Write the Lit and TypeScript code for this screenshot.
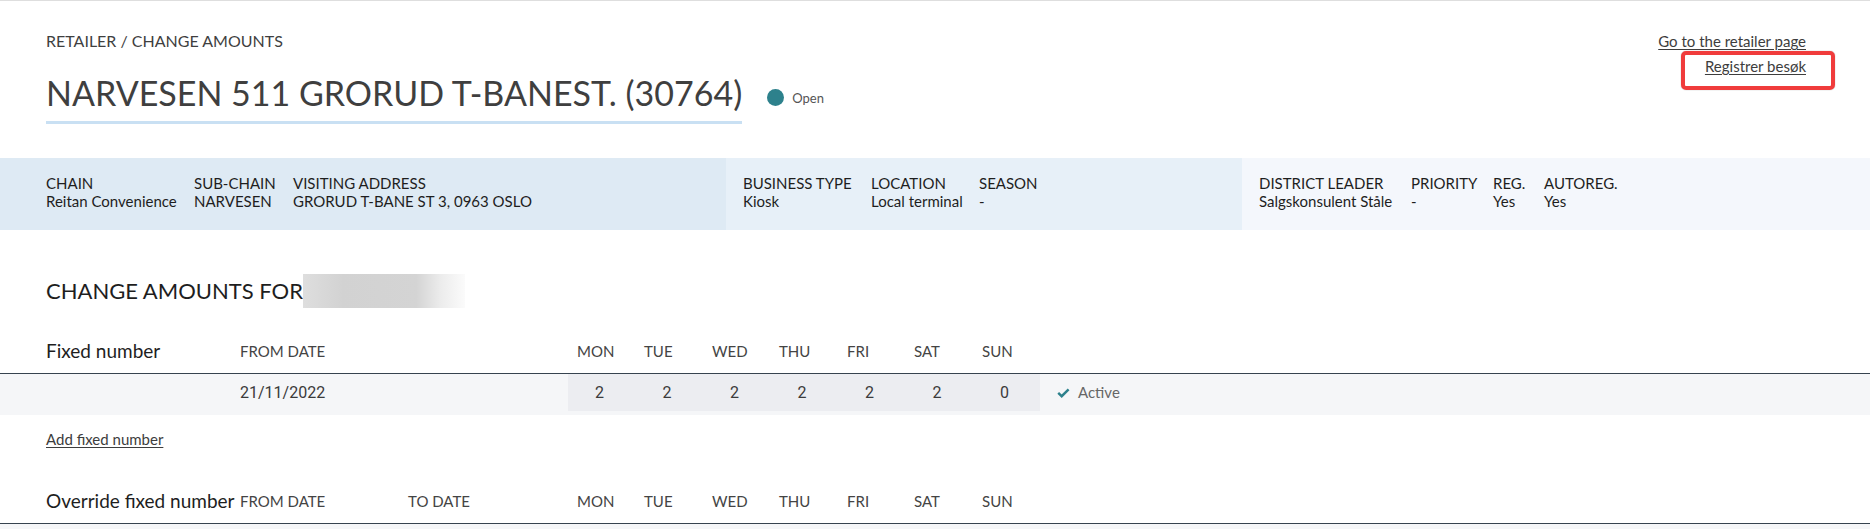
import { LitElement, html, css } from "lit";
import { customElement } from "lit/decorators.js";

const DAYS = ["MON", "TUE", "WED", "THU", "FRI", "SAT", "SUN"];

const INFO = [
  {
    name: "outlet",
    items: [
      ["CHAIN", "Reitan Convenience"],
      ["SUB-CHAIN", "NARVESEN"],
      ["VISITING ADDRESS", "GRORUD T-BANE ST 3, 0963 OSLO"],
    ],
  },
  {
    name: "business",
    items: [
      ["BUSINESS TYPE", "Kiosk"],
      ["LOCATION", "Local terminal"],
      ["SEASON", "-"],
    ],
  },
  {
    name: "district",
    items: [
      ["DISTRICT LEADER", "Salgskonsulent Ståle"],
      ["PRIORITY", "-"],
      ["REG.", "Yes"],
      ["AUTOREG.", "Yes"],
    ],
  },
];

interface AmountRow {
  from: string;
  to: string;
  amounts: number[];
  status: string;
}

@customElement("app-root")
export class AppRoot extends LitElement {
  static styles = css`
    :host {
      display: block;
      border-top: 1px solid #dedede;
      background: #fff;
      color: #1e1e1e;
      font-family: Lato, "Liberation Sans", sans-serif;
      font-size: 15px;
      line-height: 18px;
    }
    a {
      color: #3d3d3d;
      text-underline-offset: 2px;
    }
    .top {
      display: flex;
      justify-content: space-between;
      padding: 30px 64px 34px 46px;
      color: #3f3f3f;
    }
    .crumb {
      font-size: 16px;
      line-height: 20px;
    }
    .headline {
      display: flex;
      align-items: center;
      gap: 25px;
      margin-top: 20px;
    }
    h1 {
      margin: 0;
      padding-bottom: 6px;
      border-bottom: 3px solid #c9e0f3;
      font-size: 34px;
      line-height: 44px;
      font-weight: 400;
    }
    .state {
      display: flex;
      align-items: center;
      gap: 8px;
      font-size: 13px;
      color: #555;
    }
    .dot {
      width: 17px;
      height: 17px;
      border-radius: 50%;
      background: #2d818c;
    }
    .links {
      display: flex;
      flex-direction: column;
      align-items: flex-end;
      margin-top: -2px;
      line-height: 25px;
    }
    .marked {
      position: relative;
    }
    .marked::after {
      content: "";
      position: absolute;
      inset: -3px -29px -11px -24px;
      border: 4px solid #f03c3c;
      border-radius: 5px;
      box-shadow: 0 0 1px #888;
      pointer-events: none;
    }
    .info {
      display: grid;
      grid-template-columns: 726fr 516fr 628fr;
    }
    .group {
      display: grid;
      margin: 0;
      padding: 16px 16px 20px 17px;
      white-space: nowrap;
    }
    .group dd {
      margin: 0;
    }
    .outlet {
      padding-left: 46px;
      grid-template-columns: 148px 99px 1fr;
      background: #deeaf4;
    }
    .business {
      grid-template-columns: 128px 108px 1fr;
      background: #e7f0f8;
    }
    .district {
      grid-template-columns: 152px 82px 51px 1fr;
      background: #f4f7fc;
    }
    .title {
      display: flex;
      align-items: center;
      margin: 44px 46px 25px;
      font-size: 22px;
      line-height: 34px;
      font-weight: 400;
    }
    .masked {
      width: 162px;
      height: 34px;
      background: linear-gradient(90deg, #dedede, #d2d2d2 25%, #d4d4d4 70%, #ececec 85%, #fbfbfb);
    }
    table {
      width: 100%;
      table-layout: fixed;
      border-collapse: separate;
      border-spacing: 0;
      white-space: nowrap;
    }
    th,
    td {
      padding: 0;
      text-align: left;
      font-weight: 400;
      color: #444;
    }
    thead th {
      height: 40px;
      border-bottom: 1px solid #36434f;
      vertical-align: top;
      line-height: 37px;
    }
    thead .name {
      width: 194px;
      padding-left: 46px;
      font-size: 19px;
      color: #1e1e1e;
      line-height: 35px;
    }
    .from {
      width: 168px;
    }
    .to {
      width: 160px;
    }
    .day {
      width: 58px;
      padding-left: 9px;
    }
    .day:nth-child(odd) {
      width: 59px;
    }
    tbody tr {
      background: #f5f6f8;
    }
    tbody td {
      height: 41px;
      vertical-align: top;
      line-height: 37px;
    }
    .date,
    .amount {
      font-family: Roboto, "Liberation Sans", sans-serif;
      font-size: 16px;
      color: #3b3b3b;
    }
    .box {
      height: 37px;
      padding-right: 4px;
      background: #ecedf1;
      text-align: center;
    }
    .status {
      padding-left: 17px;
      color: #666;
    }
    .status svg {
      width: 13px;
      height: 10px;
      margin-right: 8px;
    }
    tbody .empty {
      height: 5px;
    }
    .add {
      display: block;
      width: fit-content;
      margin: 14px 46px 34px;
      line-height: 20px;
    }
  `;

  private amountTable(name: string, hasEnd: boolean, rows: AmountRow[]) {
    return html`
      <table>
        <thead>
          <tr>
            <th class="name" scope="col">${name}</th>
            <th class="from" scope="col">FROM DATE</th>
            <th class="to" scope="col">${hasEnd ? "TO DATE" : ""}</th>
            ${DAYS.map((d) => html`<th class="day" scope="col">${d}</th>`)}
            <th></th>
          </tr>
        </thead>
        <tbody>
          ${rows.map(
            (r) => html`<tr>
              <td></td>
              <td class="date">${r.from}</td>
              <td class="date">${r.to}</td>
              ${r.amounts.map((n) => html`<td class="amount"><div class="box">${n}</div></td>`)}
              <td class="status">
                <svg viewBox="0 0 13 10" aria-hidden="true">
                  <path d="M1.2 4.8 4.7 8.2 11.6 1.3" fill="none" stroke="#2d818c" stroke-width="2.4" /></svg
                >${r.status}
              </td>
            </tr>`
          )}
          ${rows.length === 0 ? html`<tr><td class="empty" colspan="11"></td></tr>` : ""}
        </tbody>
      </table>
    `;
  }

  render() {
    return html`
      <header class="top">
        <div>
          <div class="crumb">RETAILER / CHANGE AMOUNTS</div>
          <div class="headline">
            <h1>NARVESEN 511 GRORUD T-BANEST. (30764)</h1>
            <div class="state"><span class="dot"></span>Open</div>
          </div>
        </div>
        <nav class="links">
          <a href="#retailer">Go to the retailer page</a>
          <a class="marked" href="#visit">Registrer besøk</a>
        </nav>
      </header>
      <section class="info">
        ${INFO.map(
          (g) => html`<dl class="group ${g.name}">
            ${g.items.map(([k, v]) => html`<div><dt>${k}</dt><dd>${v}</dd></div>`)}
          </dl>`
        )}
      </section>
      <main>
        <h2 class="title">CHANGE AMOUNTS FOR<span class="masked"></span></h2>
        ${this.amountTable("Fixed number", false, [
          { from: "21/11/2022", to: "", amounts: [2, 2, 2, 2, 2, 2, 0], status: "Active" },
        ])}
        <a class="add" href="#add">Add fixed number</a>
        ${this.amountTable("Override fixed number", true, [])}
      </main>
    `;
  }
}
